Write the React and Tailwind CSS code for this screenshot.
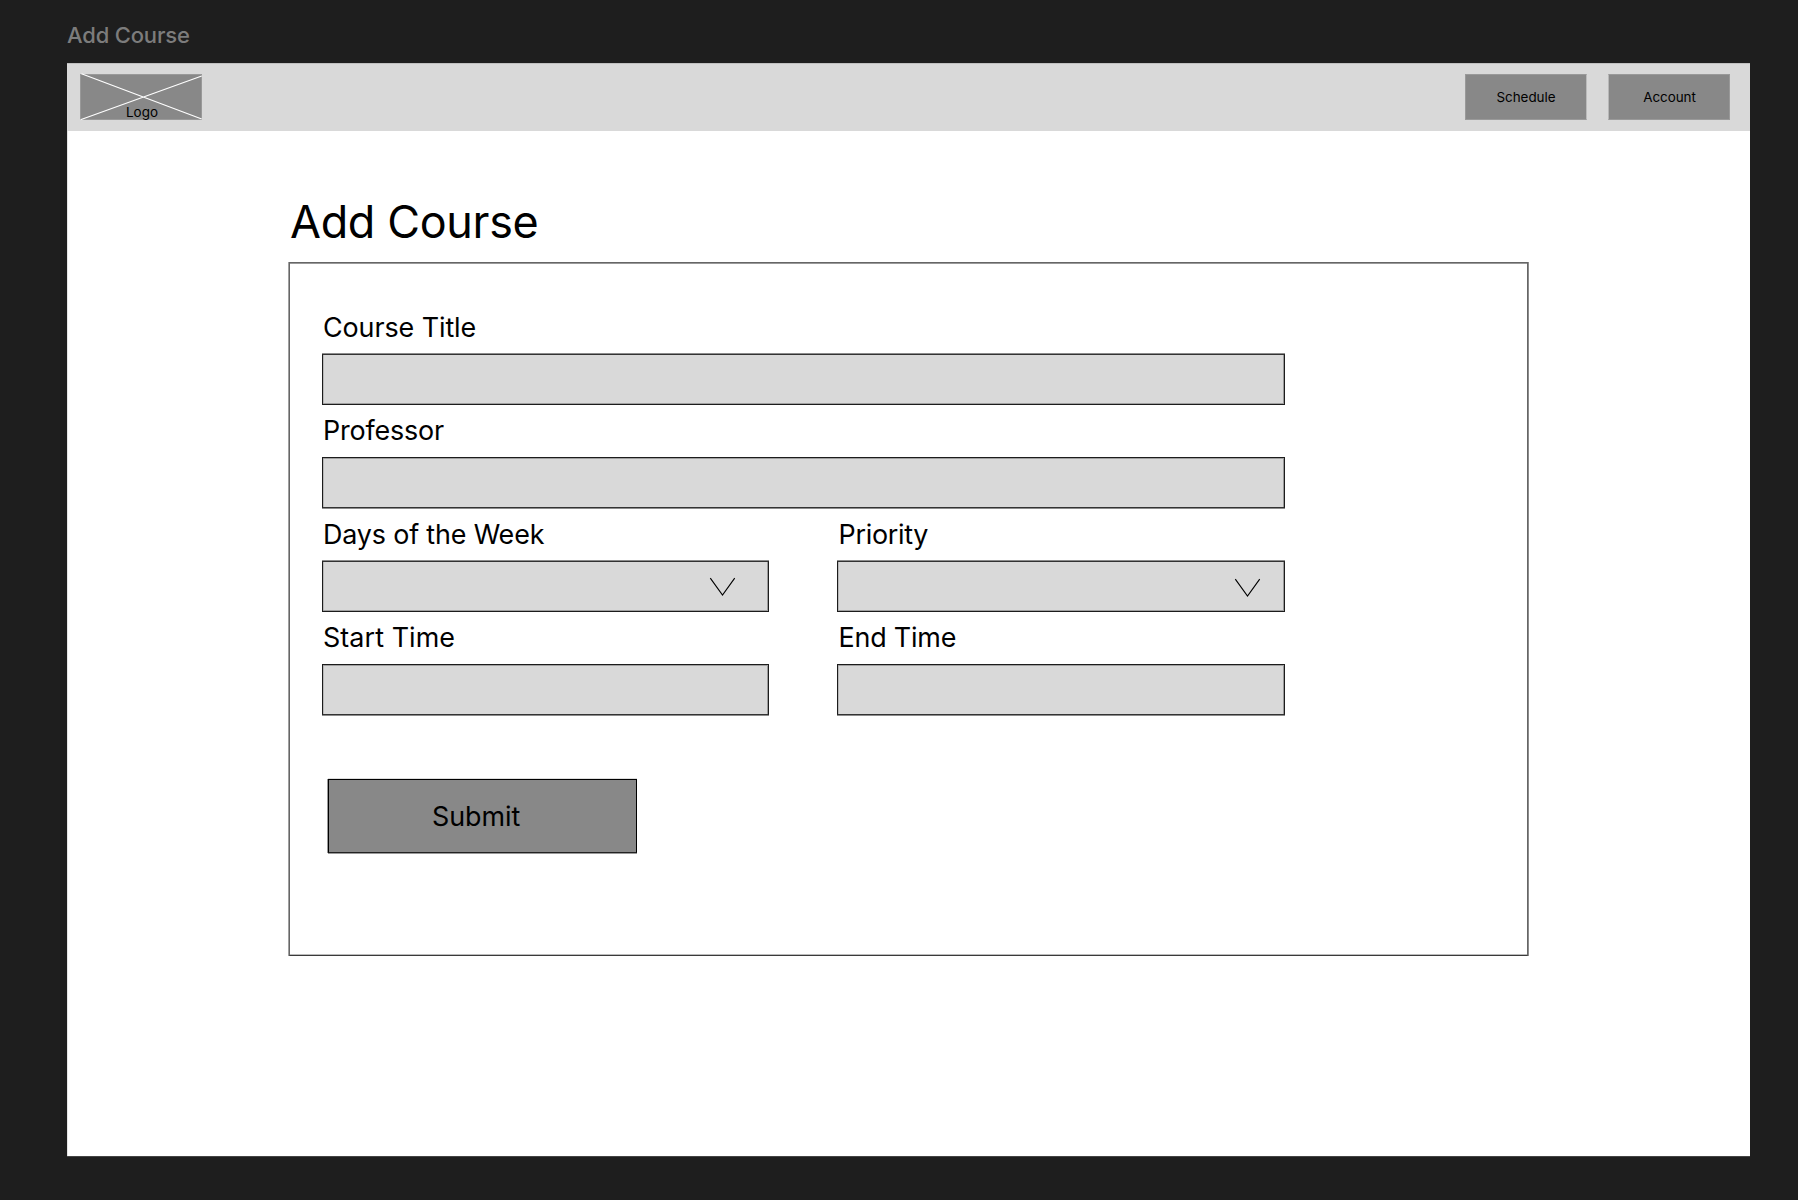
import React from "react";

// Soft hairlines that sit just outside or just inside a field's dark border.
const SOFT_EDGE = {
  outerTop:
    "mt-[10px] border-t-[#333333] shadow-[0_-1px_0_#8c8c8c,inset_0_-1px_0_#a0a0a0,inset_-1px_0_0_#999999,inset_1px_0_0_#b8b8b8]",
  outerBottom:
    "mt-[9px] border-b-[#333333] shadow-[0_1px_0_#8c8c8c,inset_0_1px_0_#a0a0a0,inset_-1px_0_0_#999999,inset_1px_0_0_#b8b8b8]",
};

// Label line boxes keep each baseline a constant distance above its field.
const LABEL_LEADING = {
  outerTop: "leading-[34px]",
  outerBottom: "leading-8",
};

function Chevron({ className }) {
  return (
    <svg className={className} width="27" height="20" viewBox="0 0 27 20" fill="none">
      <path d="M1.3 1.2 L13.5 18 L25.7 1.2" stroke="#000" strokeWidth="1.12" />
    </svg>
  );
}

function Field({ label, edge, width, labelClass, children }) {
  return (
    <div className={width}>
      <div className={`h-[34px] text-[26.9px] whitespace-nowrap ${LABEL_LEADING[edge]} ${labelClass}`}>
        {label}
      </div>
      <div
        className={`flex h-[51px] justify-end border border-[#1c1c1c] bg-[#d9d9d9] ${SOFT_EDGE[edge]}`}
      >
        {children}
      </div>
    </div>
  );
}

function NavButton({ className, children }) {
  return (
    <button
      className={`flex h-[46px] w-[122px] items-center justify-center border border-[#999999] bg-[#888888] text-[13.45px] leading-4 tracking-[-0.05px] ${className}`}
    >
      {children}
    </button>
  );
}

function Logo() {
  return (
    <div className="relative h-[46px] w-[122px] border border-[#999999] bg-[#888888]">
      <svg className="absolute -top-px -left-px" width="122" height="46" viewBox="0 0 122 46" overflow="visible">
        <path d="M1.5 -0.3 L121.7 45 M0.5 45.7 L121.7 2" stroke="#fff" strokeWidth="1.12" />
      </svg>
      <span className="absolute top-[29px] left-[45px] text-[13.45px] leading-4">Logo</span>
    </div>
  );
}

export default function App() {
  return (
    <div className="h-[1200px] w-[1798px] overflow-hidden bg-[#1e1e1e] pl-[67px] font-['Inter',sans-serif] text-black">
      <div className="h-[63px] pt-[23px] text-[22px] leading-6 font-medium tracking-[-0.18px] text-[#7c7c7c]">
        Add Course
      </div>
      <div className="h-[1093px] w-[1683px] bg-white shadow-[0_1px_0_#444444,inset_1px_0_0_#e4e4e4]">
        <header className="flex h-[68px] items-center gap-[21px] bg-[#d9d9d9] pr-5 pl-[13px] shadow-[inset_0_1px_0_#c0c0c0]">
          <div className="mr-auto">
            <Logo />
          </div>
          <NavButton className="border-r-[#bbbbbb]">Schedule</NavButton>
          <NavButton className="border-l-[#b8b8b8] pl-px">Account</NavButton>
        </header>

        <main className="pt-[65px] pl-[222px]">
          <h1 className="h-[66px] pl-px text-[44.9px] leading-[52px] tracking-[-0.32px]">Add Course</h1>
          <section className="h-[694px] w-[1239px] border border-[#666666] border-b-[#3a3a3a] pt-[47px] pl-8 shadow-[-1px_0_0_#a0a0a0,1px_0_0_#8c8c8c,inset_0_1px_0_#999999,inset_0_-1px_0_#bbbbbb]">
            <div className="flex w-[963px] flex-col gap-[9px]">
              <Field label="Course Title" edge="outerTop" width="w-full" labelClass="pl-px tracking-[-0.08px]" />
              <Field label="Professor" edge="outerBottom" width="w-full" labelClass="pl-px tracking-[-0.17px]" />
              <div className="flex justify-between">
                <Field
                  label="Days of the Week"
                  edge="outerTop"
                  width="w-[447px]"
                  labelClass="pl-px tracking-[-0.16px]"
                >
                  <Chevron className="mt-[15px] mr-8" />
                </Field>
                <Field
                  label="Priority"
                  edge="outerTop"
                  width="w-[448px]"
                  labelClass="pl-[1.5px] tracking-[-0.28px]"
                >
                  <Chevron className="mt-4 mr-[23px]" />
                </Field>
              </div>
              <div className="flex justify-between">
                <Field
                  label="Start Time"
                  edge="outerBottom"
                  width="w-[447px]"
                  labelClass="pl-px tracking-[0.08px]"
                />
                <Field
                  label="End Time"
                  edge="outerBottom"
                  width="w-[448px]"
                  labelClass="pl-[1.5px] tracking-[-0.18px]"
                />
              </div>
            </div>
            <button className="mt-16 ml-[6px] block h-[74px] w-[309px] border border-black border-b-[#222222] bg-[#888888] pl-[103px] text-left text-[26.9px] leading-[34px] tracking-[-0.05px] shadow-[-1px_0_0_#999999,0_-1px_0_#dddddd,0_1px_0_#999999]">
              Submit
            </button>
          </section>
        </main>
      </div>
    </div>
  );
}
